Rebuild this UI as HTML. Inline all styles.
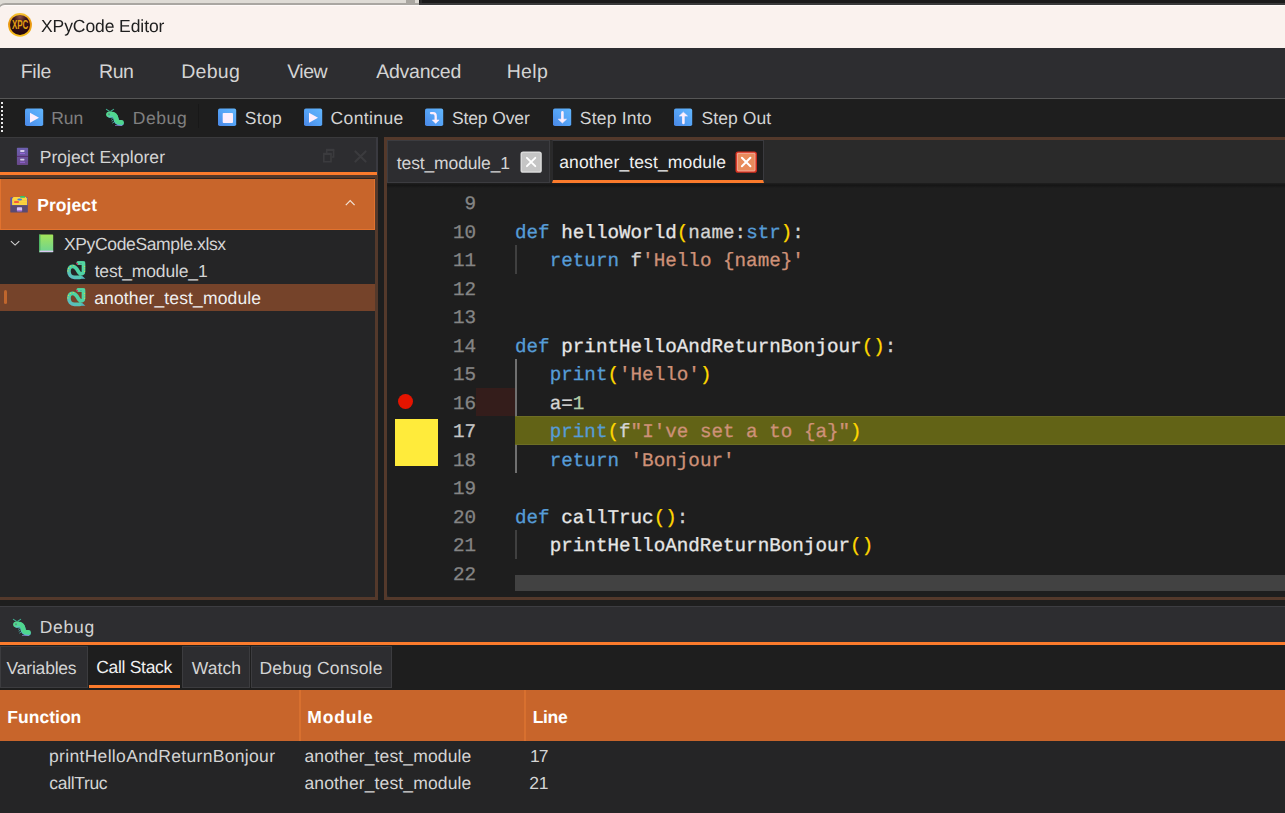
<!DOCTYPE html>
<html lang="en"><head><meta charset="utf-8"><title>XPyCode Editor</title>
<style>
html,body{margin:0;padding:0;}
body{width:1285px;height:813px;overflow:hidden;position:relative;background:#1e1e1e;font-kerning:none;-webkit-font-smoothing:antialiased;}
.b{position:absolute;box-sizing:border-box;}
.t{position:absolute;white-space:pre;font-kerning:none;text-rendering:geometricPrecision;}
svg{position:absolute;overflow:visible;}
</style></head><body>
<div class="b" style="left:0px;top:0px;width:1285px;height:16px;background:#dedbd5;"></div>
<div class="b" style="left:406px;top:0px;width:9px;height:4px;background:#a9a6a0;"></div>
<div class="b" style="left:419px;top:0px;width:866px;height:6px;background:#1b1b1b;"></div>
<div class="b" style="left:420px;top:0px;width:1.5px;height:3.4px;background:#2c2c2c;"></div>
<div class="b" style="left:-3.5px;top:3.2px;width:1292px;height:45px;background:#a9a6a1;border-top-left-radius:8.5px;"></div>
<div class="b" style="left:-2px;top:4.8px;width:1290px;height:43.2px;background:#faf2ee;border-top-left-radius:7px;border-top:1px solid #fffaf8;"></div>
<div class="b" style="left:419px;top:3.2px;width:866px;height:1.7px;background:#3a3a3a;"></div>
<span class="t" style="left:40.51px;top:14px;font:400 17.5px/24px 'Liberation Sans',sans-serif;letter-spacing:-0.086px;color:#202020;will-change:transform;">XPyCode Editor</span>
<div class="b" style="left:0px;top:48px;width:1285px;height:50px;background:#2d2d30;"></div>
<div class="b" style="left:0px;top:98px;width:1285px;height:1px;background:#565656;"></div>
<span class="t" style="left:20.70px;top:59px;font:400 19.5px/26px 'Liberation Sans',sans-serif;letter-spacing:-0.252px;color:#d4d4d4;">File</span>
<span class="t" style="left:99.00px;top:59px;font:400 19.5px/26px 'Liberation Sans',sans-serif;letter-spacing:-0.403px;color:#d4d4d4;">Run</span>
<span class="t" style="left:181.20px;top:59px;font:400 19.5px/26px 'Liberation Sans',sans-serif;letter-spacing:0.274px;color:#d4d4d4;">Debug</span>
<span class="t" style="left:287.21px;top:59px;font:400 19.5px/26px 'Liberation Sans',sans-serif;letter-spacing:-0.509px;color:#d4d4d4;">View</span>
<span class="t" style="left:376.26px;top:59px;font:400 19.5px/26px 'Liberation Sans',sans-serif;letter-spacing:-0.248px;color:#d4d4d4;">Advanced</span>
<span class="t" style="left:506.70px;top:59px;font:400 19.5px/26px 'Liberation Sans',sans-serif;letter-spacing:0.338px;color:#d4d4d4;">Help</span>
<div class="b" style="left:0px;top:99px;width:1285px;height:38px;background:#1e1e1e;"></div>
<div class="b" style="left:0px;top:137px;width:378px;height:1px;background:#3a3a3c;"></div>
<div class="b" style="left:1px;top:102px;width:2px;height:30px;background:repeating-linear-gradient(to bottom,#e8e8e8 0 2px,transparent 2px 4px);"></div>
<div class="b" style="left:198px;top:104px;width:1px;height:24px;background:#181818;"></div>
<span class="t" style="left:51.16px;top:106px;font:400 17.5px/24px 'Liberation Sans',sans-serif;letter-spacing:0.034px;color:#808080;">Run</span>
<span class="t" style="left:132.86px;top:106px;font:400 17.5px/24px 'Liberation Sans',sans-serif;letter-spacing:0.549px;color:#808080;">Debug</span>
<span class="t" style="left:244.81px;top:106px;font:400 17.5px/24px 'Liberation Sans',sans-serif;letter-spacing:0.277px;color:#d4d4d4;">Stop</span>
<span class="t" style="left:330.51px;top:106px;font:400 17.5px/24px 'Liberation Sans',sans-serif;letter-spacing:0.388px;color:#d4d4d4;">Continue</span>
<span class="t" style="left:451.91px;top:106px;font:400 17.5px/24px 'Liberation Sans',sans-serif;letter-spacing:-0.112px;color:#d4d4d4;">Step Over</span>
<span class="t" style="left:579.81px;top:106px;font:400 17.5px/24px 'Liberation Sans',sans-serif;letter-spacing:0.210px;color:#d4d4d4;">Step Into</span>
<span class="t" style="left:701.41px;top:106px;font:400 17.5px/24px 'Liberation Sans',sans-serif;letter-spacing:0.108px;color:#d4d4d4;">Step Out</span>
<div class="b" style="left:0px;top:138px;width:378px;height:37px;background:#2d2d30;border-right:2px solid #3a3a40;"></div>
<div class="b" style="left:0px;top:172px;width:377px;height:3px;background:#fb7b2c;"></div>
<div class="b" style="left:0px;top:175px;width:378px;height:4px;background:#54392b;"></div>
<div class="b" style="left:375px;top:175px;width:3px;height:425px;background:#54392b;"></div>
<div class="b" style="left:0px;top:597px;width:378px;height:3px;background:#54392b;"></div>
<div class="b" style="left:0px;top:178px;width:375px;height:1px;background:#2c2420;"></div>
<div class="b" style="left:0px;top:179px;width:375.2px;height:51px;background:#c8652b;border:1.7px solid #e2722e;border-top:none;"></div>
<div class="b" style="left:0px;top:230px;width:375px;height:367px;background:#252526;"></div>
<span class="t" style="left:39.66px;top:145px;font:400 17.5px/24px 'Liberation Sans',sans-serif;letter-spacing:0.056px;color:#d4d4d4;">Project Explorer</span>
<span class="t" style="left:37.23px;top:193px;font:700 17.5px/24px 'Liberation Sans',sans-serif;letter-spacing:0.076px;color:#ffffff;">Project</span>
<div class="b" style="left:0px;top:284px;width:375px;height:27px;background:#75432a;"></div>
<div class="b" style="left:4px;top:290px;width:3px;height:14px;background:#c0662d;border-radius:1.5px;"></div>
<span class="t" style="left:64.01px;top:232px;font:400 17.5px/24px 'Liberation Sans',sans-serif;letter-spacing:-0.364px;color:#d4d4d4;">XPyCodeSample.xlsx</span>
<span class="t" style="left:94.64px;top:259px;font:400 17.5px/24px 'Liberation Sans',sans-serif;letter-spacing:-0.148px;color:#d4d4d4;">test_module_1</span>
<span class="t" style="left:94.16px;top:286px;font:400 17.5px/24px 'Liberation Sans',sans-serif;letter-spacing:0.139px;color:#f0f0f0;">another_test_module</span>
<div class="b" style="left:384px;top:137px;width:901px;height:3px;background:#54392b;"></div>
<div class="b" style="left:384px;top:137px;width:3.2px;height:463px;background:#54392b;"></div>
<div class="b" style="left:384px;top:597px;width:901px;height:3px;background:#54392b;"></div>
<div class="b" style="left:387px;top:140px;width:898px;height:43px;background:#2a2a2a;"></div>
<div class="b" style="left:387.2px;top:140px;width:162.6px;height:43px;background:#2d2d30;border:1px solid #3c3c40;"></div>
<div class="b" style="left:552px;top:140px;width:212px;height:43px;background:#1e1e1e;border:1px solid #3a3a3e;border-left-color:#2a2a2c;border-bottom:3px solid #fb7b2c;"></div>
<span class="t" style="left:396.84px;top:151px;font:400 17.5px/24px 'Liberation Sans',sans-serif;letter-spacing:-0.132px;color:#d4d4d4;">test_module_1</span>
<span class="t" style="left:559.16px;top:150px;font:400 17.5px/24px 'Liberation Sans',sans-serif;letter-spacing:0.128px;color:#f0f0f0;">another_test_module</span>
<div class="b" style="left:387.2px;top:590px;width:8px;height:7px;background:#2a2a2a;"></div>
<div class="b" style="left:387.2px;top:183px;width:898px;height:414px;background:#1e1e1e;border-bottom-left-radius:4px;"></div>
<div class="b" style="left:387.2px;top:183px;width:898px;height:5px;background:transparent;background:linear-gradient(to bottom,#1f1f1f 0,#151515 45%,#1e1e1e 100%);"></div>
<div class="b" style="left:0px;top:606px;width:1285px;height:36px;background:#2d2d30;"></div>
<div class="b" style="left:0px;top:605.7px;width:1285px;height:1.5px;background:#3d3d41;"></div>
<div class="b" style="left:0px;top:642px;width:1285px;height:3px;background:#fb7b2c;"></div>
<div class="b" style="left:0px;top:645px;width:1285px;height:45px;background:#1e1e1e;"></div>
<span class="t" style="left:39.66px;top:615px;font:400 17.5px/24px 'Liberation Sans',sans-serif;letter-spacing:0.724px;color:#d4d4d4;">Debug</span>
<div class="b" style="left:0px;top:646px;width:87.6px;height:42.3px;background:#2d2d30;border:1px solid #3c3c3f;"></div>
<span class="t" style="left:6.62px;top:656px;font:400 17.5px/24px 'Liberation Sans',sans-serif;letter-spacing:-0.206px;color:#d4d4d4;">Variables</span>
<div class="b" style="left:88.7px;top:646px;width:91.6px;height:42.3px;background:#1e1e1e;border-bottom:3px solid #fb7b2c;"></div>
<span class="t" style="left:96.21px;top:655px;font:400 17.5px/24px 'Liberation Sans',sans-serif;letter-spacing:-0.301px;color:#f0f0f0;">Call Stack</span>
<div class="b" style="left:182.1px;top:646px;width:67.7px;height:42.3px;background:#2d2d30;border:1px solid #3c3c3f;"></div>
<span class="t" style="left:191.72px;top:656px;font:400 17.5px/24px 'Liberation Sans',sans-serif;letter-spacing:0.105px;color:#d4d4d4;">Watch</span>
<div class="b" style="left:251.2px;top:646px;width:140.7px;height:42.3px;background:#2d2d30;border:1px solid #3c3c3f;"></div>
<span class="t" style="left:259.46px;top:656px;font:400 17.5px/24px 'Liberation Sans',sans-serif;letter-spacing:0.190px;color:#d4d4d4;">Debug Console</span>
<div class="b" style="left:0px;top:690px;width:1285px;height:50.5px;background:#c8652b;"></div>
<div class="b" style="left:299px;top:690px;width:2px;height:50.5px;background:#d8702f;"></div>
<div class="b" style="left:524px;top:690px;width:2px;height:50.5px;background:#d8702f;"></div>
<div class="b" style="left:0px;top:740.5px;width:1285px;height:73px;background:#252526;"></div>
<span class="t" style="left:7.33px;top:705px;font:700 17.5px/24px 'Liberation Sans',sans-serif;letter-spacing:0.012px;color:#ffffff;">Function</span>
<span class="t" style="left:307.23px;top:705px;font:700 17.5px/24px 'Liberation Sans',sans-serif;letter-spacing:0.845px;color:#ffffff;">Module</span>
<span class="t" style="left:532.63px;top:705px;font:700 17.5px/24px 'Liberation Sans',sans-serif;letter-spacing:-0.302px;color:#ffffff;">Line</span>
<span class="t" style="left:48.97px;top:744px;font:400 17.5px/24px 'Liberation Sans',sans-serif;letter-spacing:0.325px;color:#d4d4d4;">printHelloAndReturnBonjour</span>
<span class="t" style="left:49.36px;top:771px;font:400 17.5px/24px 'Liberation Sans',sans-serif;letter-spacing:-0.336px;color:#d4d4d4;">callTruc</span>
<span class="t" style="left:304.46px;top:744px;font:400 17.5px/24px 'Liberation Sans',sans-serif;letter-spacing:0.133px;color:#d4d4d4;">another_test_module</span>
<span class="t" style="left:304.46px;top:771px;font:400 17.5px/24px 'Liberation Sans',sans-serif;letter-spacing:0.133px;color:#d4d4d4;">another_test_module</span>
<span class="t" style="left:529.97px;top:744px;font:400 17.5px/24px 'Liberation Sans',sans-serif;letter-spacing:-0.852px;color:#d4d4d4;">17</span>
<span class="t" style="left:529.22px;top:771px;font:400 17.5px/24px 'Liberation Sans',sans-serif;letter-spacing:-0.131px;color:#d4d4d4;">21</span>
<div class="b" style="left:476px;top:388px;width:39px;height:28px;background:#341d1b;"></div>
<div class="b" style="left:515px;top:575.3px;width:770px;height:15.3px;background:#424242;"></div>
<div class="b" style="left:398px;top:393.7px;width:15.2px;height:15.2px;background:#e51400;border-radius:50%;"></div>
<div class="b" style="left:395px;top:419px;width:43.2px;height:47px;background:#ffeb3b;"></div>
<div class="b" style="left:515px;top:245.0px;width:1.8px;height:28.5px;background:#404040;"></div>
<div class="b" style="left:515px;top:359.0px;width:1.8px;height:114.0px;background:#707070;"></div>
<div class="b" style="left:515px;top:530.0px;width:1.8px;height:28.5px;background:#404040;"></div>
<div class="b" style="left:515px;top:415.8px;width:770px;height:28.9px;background:#626316;border-top:1px solid #6d6e24;border-bottom:1px solid #6d6e24;"></div>
<span class="t" style="left:464.44px;top:190.27px;font:400 19.26px/28px 'Liberation Mono',monospace;letter-spacing:0.002px;-webkit-text-stroke:0.3px;color:#858585;">9</span>
<span class="t" style="left:452.88px;top:218.77px;font:400 19.26px/28px 'Liberation Mono',monospace;letter-spacing:0.002px;-webkit-text-stroke:0.3px;color:#858585;">10</span>
<span class="t" style="left:515.00px;top:218.77px;font:400 19.26px/28px 'Liberation Mono',monospace;letter-spacing:0.002px;-webkit-text-stroke:0.3px;"><span style="color:#569cd6">def</span><span style="color:#d4d4d4"> </span><span style="color:#e6e6e6">helloWorld</span><span style="color:#ffd700">(</span><span style="color:#d4d4d4">name:</span><span style="color:#569cd6">str</span><span style="color:#ffd700">)</span><span style="color:#d4d4d4">:</span></span>
<span class="t" style="left:452.88px;top:247.27px;font:400 19.26px/28px 'Liberation Mono',monospace;letter-spacing:0.002px;-webkit-text-stroke:0.3px;color:#858585;">11</span>
<span class="t" style="left:515.00px;top:247.27px;font:400 19.26px/28px 'Liberation Mono',monospace;letter-spacing:0.002px;-webkit-text-stroke:0.3px;"><span style="color:#d4d4d4">   </span><span style="color:#569cd6">return</span><span style="color:#d4d4d4"> f</span><span style="color:#ce9178">&#x27;Hello {name}&#x27;</span></span>
<span class="t" style="left:452.88px;top:275.77px;font:400 19.26px/28px 'Liberation Mono',monospace;letter-spacing:0.002px;-webkit-text-stroke:0.3px;color:#858585;">12</span>
<span class="t" style="left:452.88px;top:304.27px;font:400 19.26px/28px 'Liberation Mono',monospace;letter-spacing:0.002px;-webkit-text-stroke:0.3px;color:#858585;">13</span>
<span class="t" style="left:452.88px;top:332.77px;font:400 19.26px/28px 'Liberation Mono',monospace;letter-spacing:0.002px;-webkit-text-stroke:0.3px;color:#858585;">14</span>
<span class="t" style="left:515.00px;top:332.77px;font:400 19.26px/28px 'Liberation Mono',monospace;letter-spacing:0.002px;-webkit-text-stroke:0.3px;"><span style="color:#569cd6">def</span><span style="color:#d4d4d4"> </span><span style="color:#e6e6e6">printHelloAndReturnBonjour</span><span style="color:#ffd700">()</span><span style="color:#d4d4d4">:</span></span>
<span class="t" style="left:452.88px;top:361.27px;font:400 19.26px/28px 'Liberation Mono',monospace;letter-spacing:0.002px;-webkit-text-stroke:0.3px;color:#858585;">15</span>
<span class="t" style="left:515.00px;top:361.27px;font:400 19.26px/28px 'Liberation Mono',monospace;letter-spacing:0.002px;-webkit-text-stroke:0.3px;"><span style="color:#d4d4d4">   </span><span style="color:#569cd6">print</span><span style="color:#ffd700">(</span><span style="color:#ce9178">&#x27;Hello&#x27;</span><span style="color:#ffd700">)</span></span>
<span class="t" style="left:452.88px;top:389.77px;font:400 19.26px/28px 'Liberation Mono',monospace;letter-spacing:0.002px;-webkit-text-stroke:0.3px;color:#858585;">16</span>
<span class="t" style="left:515.00px;top:389.77px;font:400 19.26px/28px 'Liberation Mono',monospace;letter-spacing:0.002px;-webkit-text-stroke:0.3px;"><span style="color:#d4d4d4">   a=</span><span style="color:#b5cea8">1</span></span>
<span class="t" style="left:452.88px;top:418.27px;font:400 19.26px/28px 'Liberation Mono',monospace;letter-spacing:0.002px;-webkit-text-stroke:0.3px;color:#c6c6c6;">17</span>
<span class="t" style="left:515.00px;top:418.27px;font:400 19.26px/28px 'Liberation Mono',monospace;letter-spacing:0.002px;-webkit-text-stroke:0.3px;"><span style="color:#d4d4d4">   </span><span style="color:#569cd6">print</span><span style="color:#ffd700">(</span><span style="color:#d4d4d4">f</span><span style="color:#ce9178">&quot;I&#x27;ve set a to {a}&quot;</span><span style="color:#ffd700">)</span></span>
<span class="t" style="left:452.88px;top:446.77px;font:400 19.26px/28px 'Liberation Mono',monospace;letter-spacing:0.002px;-webkit-text-stroke:0.3px;color:#858585;">18</span>
<span class="t" style="left:515.00px;top:446.77px;font:400 19.26px/28px 'Liberation Mono',monospace;letter-spacing:0.002px;-webkit-text-stroke:0.3px;"><span style="color:#d4d4d4">   </span><span style="color:#569cd6">return</span><span style="color:#d4d4d4"> </span><span style="color:#ce9178">&#x27;Bonjour&#x27;</span></span>
<span class="t" style="left:452.88px;top:475.27px;font:400 19.26px/28px 'Liberation Mono',monospace;letter-spacing:0.002px;-webkit-text-stroke:0.3px;color:#858585;">19</span>
<span class="t" style="left:452.88px;top:503.77px;font:400 19.26px/28px 'Liberation Mono',monospace;letter-spacing:0.002px;-webkit-text-stroke:0.3px;color:#858585;">20</span>
<span class="t" style="left:515.00px;top:503.77px;font:400 19.26px/28px 'Liberation Mono',monospace;letter-spacing:0.002px;-webkit-text-stroke:0.3px;"><span style="color:#569cd6">def</span><span style="color:#d4d4d4"> </span><span style="color:#e6e6e6">callTruc</span><span style="color:#ffd700">()</span><span style="color:#d4d4d4">:</span></span>
<span class="t" style="left:452.88px;top:532.27px;font:400 19.26px/28px 'Liberation Mono',monospace;letter-spacing:0.002px;-webkit-text-stroke:0.3px;color:#858585;">21</span>
<span class="t" style="left:515.00px;top:532.27px;font:400 19.26px/28px 'Liberation Mono',monospace;letter-spacing:0.002px;-webkit-text-stroke:0.3px;"><span style="color:#d4d4d4">   </span><span style="color:#e6e6e6">printHelloAndReturnBonjour</span><span style="color:#ffd700">()</span></span>
<span class="t" style="left:452.88px;top:560.77px;font:400 19.26px/28px 'Liberation Mono',monospace;letter-spacing:0.002px;-webkit-text-stroke:0.3px;color:#858585;">22</span>
<svg width="0" height="0" style="left:0;top:0"><defs>
<linearGradient id="gb" x1="1" y1="0" x2="0" y2="1"><stop offset="0" stop-color="#62b6fd"/><stop offset="0.5" stop-color="#55a3f6"/><stop offset="1" stop-color="#4a87e6"/></linearGradient>
<linearGradient id="gcat" x1="0" y1="0" x2="0.6" y2="1"><stop offset="0" stop-color="#4fd68c"/><stop offset="0.6" stop-color="#4ccf96"/><stop offset="1" stop-color="#5cb2d6"/></linearGradient>
<linearGradient id="gbook" x1="0" y1="0" x2="0" y2="1"><stop offset="0" stop-color="#a4e45a"/><stop offset="1" stop-color="#6cd391"/></linearGradient>
<linearGradient id="gcab" x1="0" y1="0" x2="0" y2="1"><stop offset="0" stop-color="#6d60b0"/><stop offset="1" stop-color="#69488a"/></linearGradient>
<radialGradient id="gxpc" cx="0.5" cy="0.1" r="0.9"><stop offset="0" stop-color="#8a5048"/><stop offset="0.35" stop-color="#3a1418"/><stop offset="1" stop-color="#24070e"/></radialGradient>
<linearGradient id="gring" x1="0" y1="0" x2="0" y2="1"><stop offset="0" stop-color="#f7c432"/><stop offset="0.45" stop-color="#e8940f"/><stop offset="1" stop-color="#f8c21c"/></linearGradient>
<linearGradient id="gsnake" x1="0.8" y1="0" x2="0.2" y2="1"><stop offset="0" stop-color="#52d8a0"/><stop offset="0.6" stop-color="#4dd0a4"/><stop offset="1" stop-color="#5cbcc0"/></linearGradient>
</defs></svg>
<svg style="left:7px;top:12px" width="26" height="26" viewBox="0 0 26 26"><circle cx="13" cy="12.9" r="11.9" fill="url(#gring)"/><circle cx="13" cy="12.9" r="10" fill="url(#gxpc)"/>
<text x="4.9" y="17.3" font-family="'Liberation Sans',sans-serif" font-weight="700" font-size="13" fill="#e2a012" textLength="16.4" lengthAdjust="spacingAndGlyphs">XPC</text></svg>
<svg style="left:25px;top:108px" width="19" height="19" viewBox="0 0 19 19"><rect x="0" y="0.6" width="18.2" height="17.4" rx="1.8" fill="url(#gb)"/><path d="M5 4.7 L5 14.8 L14 9.7 Z" fill="#fdeefd"/></svg>
<svg style="left:303.7px;top:108px" width="19" height="19" viewBox="0 0 19 19"><rect x="0" y="0.6" width="18.2" height="17.4" rx="1.8" fill="url(#gb)"/><path d="M5 4.7 L5 14.8 L14 9.7 Z" fill="#fdeefd"/></svg>
<svg style="left:218px;top:108px" width="19" height="19" viewBox="0 0 19 19"><rect x="0" y="0.6" width="18.2" height="17.4" rx="1.8" fill="url(#gb)"/><rect x="4.7" y="4.9" width="10.3" height="10" rx="0.9" fill="#fdeefd"/></svg>
<svg style="left:425px;top:108px" width="19" height="19" viewBox="0 0 19 19"><rect x="0" y="0.6" width="18.2" height="17.4" rx="1.8" fill="url(#gb)"/><path d="M6 5.1 L8.2 5.1 Q10.7 5.1 10.7 8 L10.7 12.5" fill="none" stroke="#fdeefd" stroke-width="2.3" stroke-linecap="round"/><path d="M7.3 12 L14.1 12 L10.7 15.4 Z" fill="#fdeefd" stroke="#fdeefd" stroke-width="0.6" stroke-linejoin="round"/></svg>
<svg style="left:553px;top:108px" width="19" height="19" viewBox="0 0 19 19"><rect x="0" y="0.6" width="18.2" height="17.4" rx="1.8" fill="url(#gb)"/><path d="M9.4 4.4 L9.4 12" fill="none" stroke="#fdeefd" stroke-width="2.6" stroke-linecap="round"/><path d="M5.3 11.2 L13.5 11.2 L9.4 15 Z" fill="#fdeefd" stroke="#fdeefd" stroke-width="0.6" stroke-linejoin="round"/></svg>
<svg style="left:674px;top:108px" width="19" height="19" viewBox="0 0 19 19"><rect x="0" y="0.6" width="18.2" height="17.4" rx="1.8" fill="url(#gb)"/><path d="M9.4 15 L9.4 7.4" fill="none" stroke="#fdeefd" stroke-width="2.6" stroke-linecap="round"/><path d="M5.3 8 L13.5 8 L9.4 4.2 Z" fill="#fdeefd" stroke="#fdeefd" stroke-width="0.6" stroke-linejoin="round"/></svg>
<svg style="left:100px;top:102px" width="30" height="30" viewBox="0 0 30 30"><path d="M9.3 9.3 L6.4 7.4 M10.8 9.3 L13.6 7.4" stroke="#3fae90" stroke-width="1.1" stroke-linecap="round" fill="none"/>
<path d="M10 13.1 C14 12.1 15.8 14.6 16 17.1 C16.3 20.2 17.5 21.1 21.2 21.1" fill="none" stroke="#58b6d2" stroke-width="5.2" stroke-linecap="round"/>
<path d="M10 12.4 C14 11.4 15.9 13.9 16.1 16.4 C16.4 19.6 17.6 20.4 21.4 20.4" fill="none" stroke="#4fd68e" stroke-width="4.9" stroke-linecap="round"/>
<ellipse cx="10" cy="12.5" rx="3.9" ry="2.9" fill="#52d890"/>
<ellipse cx="10.6" cy="14.6" rx="2.6" ry="0.9" fill="#5cc6c0" opacity="0.8"/>
<circle cx="9" cy="12.2" r="0.95" fill="#5f8f7f"/>
<path d="M12.4 16.6 l-0.9 0.5 M12.9 18.5 l-0.9 0.5 M13.6 20.4 l-0.9 0.6" stroke="#49b0a8" stroke-width="0.9" stroke-linecap="round"/>
<path d="M15 23.5 L22 23.5" stroke="#9a8fe6" stroke-width="0.8" opacity="0.75"/></svg>
<svg style="left:6.8px;top:611.8px" width="30" height="30" viewBox="0 0 30 30"><path d="M9.3 9.3 L6.4 7.4 M10.8 9.3 L13.6 7.4" stroke="#3fae90" stroke-width="1.1" stroke-linecap="round" fill="none"/>
<path d="M10 13.1 C14 12.1 15.8 14.6 16 17.1 C16.3 20.2 17.5 21.1 21.2 21.1" fill="none" stroke="#58b6d2" stroke-width="5.2" stroke-linecap="round"/>
<path d="M10 12.4 C14 11.4 15.9 13.9 16.1 16.4 C16.4 19.6 17.6 20.4 21.4 20.4" fill="none" stroke="#4fd68e" stroke-width="4.9" stroke-linecap="round"/>
<ellipse cx="10" cy="12.5" rx="3.9" ry="2.9" fill="#52d890"/>
<ellipse cx="10.6" cy="14.6" rx="2.6" ry="0.9" fill="#5cc6c0" opacity="0.8"/>
<circle cx="9" cy="12.2" r="0.95" fill="#5f8f7f"/>
<path d="M12.4 16.6 l-0.9 0.5 M12.9 18.5 l-0.9 0.5 M13.6 20.4 l-0.9 0.6" stroke="#49b0a8" stroke-width="0.9" stroke-linecap="round"/>
<path d="M15 23.5 L22 23.5" stroke="#9a8fe6" stroke-width="0.8" opacity="0.75"/></svg>
<svg style="left:16px;top:147px" width="14" height="19" viewBox="0 0 14 19"><rect x="0.9" y="0.8" width="11.2" height="17.2" rx="0.8" fill="url(#gcab)"/>
<rect x="0.9" y="8.9" width="11.2" height="0.9" fill="#58296c"/>
<rect x="4.2" y="3" width="4.2" height="1.9" rx="0.4" fill="#d8cdea"/><rect x="4" y="6" width="5" height="1" fill="#9563d6"/>
<rect x="4.2" y="11.7" width="4.2" height="1.8" rx="0.4" fill="#d8cdea"/><rect x="4" y="14.8" width="5" height="1" fill="#9563d6"/></svg>
<svg style="left:10px;top:195px" width="19" height="19" viewBox="0 0 19 19"><path d="M0.3 3 Q0.3 2.3 1 2.3 L16.8 2.3 Q17.8 2.3 17.8 3 L17.8 11 L0.3 11 Z" fill="#5b57aa"/>
<path d="M2.1 3.4 L3.6 1.9 L15.6 1.9 L17.1 3.4 L17.1 10.2 L2.1 10.2 Z" fill="#fcd53f"/>
<rect x="2.1" y="5.2" width="15" height="0.6" fill="#f3b93a" opacity="0.7"/><rect x="2.1" y="7.6" width="15" height="0.6" fill="#f3b93a" opacity="0.6"/>
<rect x="10.2" y="1" width="4.8" height="1.8" rx="0.5" fill="#2fc36b"/>
<ellipse cx="9.7" cy="4.5" rx="2.4" ry="1" fill="#3b7fe0"/>
<rect x="4.1" y="6.2" width="4.8" height="1.6" rx="0.5" fill="#f2333f"/>
<rect x="0.3" y="10.2" width="17.5" height="7.4" rx="0.9" fill="#5a4a72"/>
<rect x="6.9" y="12.3" width="5.2" height="4" rx="0.7" fill="#d9c6f4"/><rect x="6.9" y="15.3" width="5.2" height="1" rx="0.5" fill="#9a63d8"/></svg>
<svg style="left:340px;top:195px" width="20" height="14" viewBox="0 0 20 14"><path d="M5.8 10.1 L10.2 5.6 L14.6 10.1" fill="none" stroke="#f2e2d6" stroke-width="1.25"/></svg>
<svg style="left:8px;top:236px" width="14" height="14" viewBox="0 0 14 14"><path d="M2.9 5.1 L7.1 9.1 L11.3 5.1" fill="none" stroke="#d6d6d6" stroke-width="1.05"/></svg>
<svg style="left:38px;top:234px" width="16" height="19" viewBox="0 0 16 19"><rect x="1" y="0.6" width="14.2" height="17.7" rx="0.8" fill="url(#gbook)"/>
<rect x="1" y="0.6" width="1.4" height="17.7" fill="#4fb564"/>
<rect x="1.6" y="16.6" width="13.6" height="1.5" fill="#dcc6f2"/></svg>
<svg style="left:64px;top:258px" width="26" height="24" viewBox="0 0 26 24"><path d="M8.6 18 L18.2 18 L21.4 20.7 L10 21.1 Q8 20.6 8.6 18 Z" fill="#55b4bc"/>
<path d="M14.2 5 L18.2 5 Q19.5 5 19.5 6.3 L19.5 13.2 C19.5 15.9 17.2 16.2 16.1 15.6 C14.8 14.9 14.2 13.2 13 11.4 C11.8 9.6 10.4 8.3 8.5 8.3 C6 8.3 4.9 10.8 4.9 13.2 C4.9 16.5 7 19.3 10.5 19.4 L15.5 19.4" fill="none" stroke="url(#gsnake)" stroke-width="3.7" stroke-linecap="round" stroke-linejoin="round"/>
<rect x="13" y="3.3" width="8.1" height="3.5" rx="1" fill="#52d6a0"/>
<path d="M11.5 4.7 L13.8 7 L13.9 5.3 Z" fill="#ea105c"/>
<g fill="#dcd83f"><circle cx="9.4" cy="7.5" r="0.55"/><circle cx="6.6" cy="8.5" r="0.55"/><circle cx="4.6" cy="10.4" r="0.55"/><circle cx="3.9" cy="12.9" r="0.55"/><circle cx="20.6" cy="8.4" r="0.55"/><circle cx="20.6" cy="10.7" r="0.55"/><circle cx="20.6" cy="13.4" r="0.55"/></g>
<circle cx="17" cy="5.6" r="0.7" fill="#4c9494"/></svg>
<svg style="left:64px;top:284.8px" width="26" height="24" viewBox="0 0 26 24"><path d="M8.6 18 L18.2 18 L21.4 20.7 L10 21.1 Q8 20.6 8.6 18 Z" fill="#55b4bc"/>
<path d="M14.2 5 L18.2 5 Q19.5 5 19.5 6.3 L19.5 13.2 C19.5 15.9 17.2 16.2 16.1 15.6 C14.8 14.9 14.2 13.2 13 11.4 C11.8 9.6 10.4 8.3 8.5 8.3 C6 8.3 4.9 10.8 4.9 13.2 C4.9 16.5 7 19.3 10.5 19.4 L15.5 19.4" fill="none" stroke="url(#gsnake)" stroke-width="3.7" stroke-linecap="round" stroke-linejoin="round"/>
<rect x="13" y="3.3" width="8.1" height="3.5" rx="1" fill="#52d6a0"/>
<path d="M11.5 4.7 L13.8 7 L13.9 5.3 Z" fill="#ea105c"/>
<g fill="#dcd83f"><circle cx="9.4" cy="7.5" r="0.55"/><circle cx="6.6" cy="8.5" r="0.55"/><circle cx="4.6" cy="10.4" r="0.55"/><circle cx="3.9" cy="12.9" r="0.55"/><circle cx="20.6" cy="8.4" r="0.55"/><circle cx="20.6" cy="10.7" r="0.55"/><circle cx="20.6" cy="13.4" r="0.55"/></g>
<circle cx="17" cy="5.6" r="0.7" fill="#4c9494"/></svg>
<svg style="left:321px;top:147px" width="50" height="18" viewBox="0 0 50 18"><g fill="none" stroke="#3b3b3e" stroke-width="1.6"><path d="M5.7 6.2 L5.7 3 L12.6 3 L12.6 10 L10.8 10"/><rect x="2.8" y="6.9" width="7.2" height="7.8"/></g>
<path d="M5 2.8 L13.3 2.8 M2.2 6.8 L10.6 6.8" stroke="#3b3b3e" stroke-width="2.2"/>
<path d="M34.4 4.4 L44.6 14.6 M44.6 4.4 L34.4 14.6" stroke="#3b3b3e" stroke-width="2.1" stroke-linecap="round"/></svg>
<svg style="left:520px;top:151px" width="23" height="23" viewBox="0 0 23 23"><rect x="0.5" y="0.4" width="21.3" height="21.4" rx="2.6" fill="#dadada"/><rect x="2" y="1.9" width="18.3" height="18.4" rx="1.4" fill="#c5c5c5"/>
<path d="M6.9 6.8 L15.3 15.2 M15.3 6.8 L6.9 15.2" stroke="#ffffff" stroke-width="1.9" stroke-linecap="round"/></svg>
<svg style="left:735px;top:151px" width="23" height="23" viewBox="0 0 23 23"><rect x="0.5" y="0.4" width="21.4" height="21.4" rx="2.6" fill="#d9301f"/><rect x="1.9" y="1.8" width="18.6" height="18.6" rx="1.4" fill="#f0a08c"/><rect x="3" y="2.9" width="16.4" height="16.4" rx="0.8" fill="#e88b5b"/>
<path d="M6.9 6.8 L15.4 15.2 M15.4 6.8 L6.9 15.2" stroke="#ffffff" stroke-width="2" stroke-linecap="round"/></svg>
</body></html>
